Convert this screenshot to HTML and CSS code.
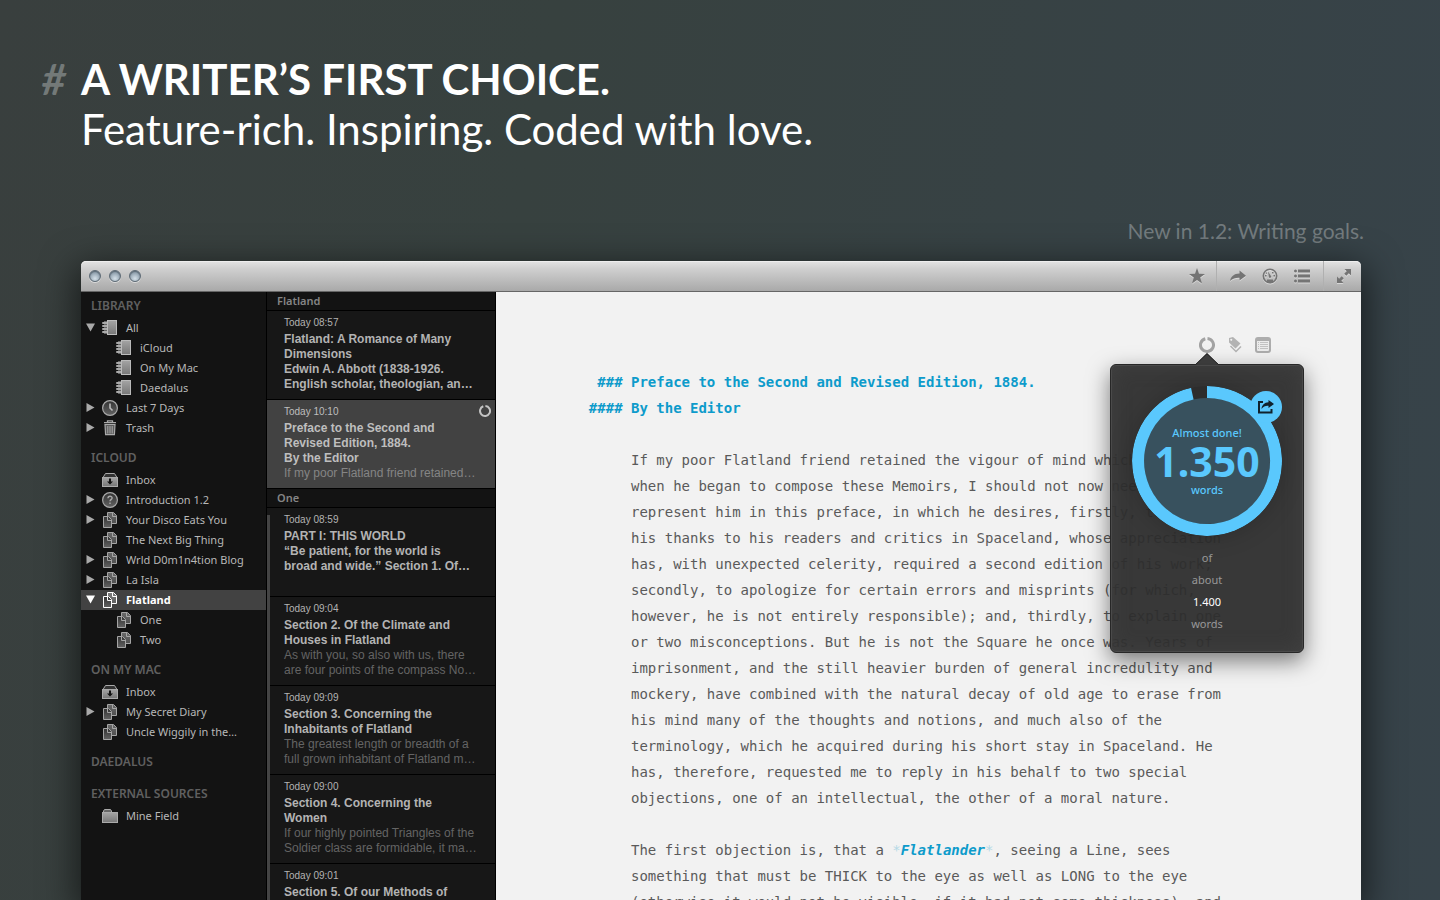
FILE: index.html
```html
<!DOCTYPE html>
<html lang="en">
<head>
<meta charset="utf-8">
<meta name="viewport" content="width=device-width, initial-scale=1">
<title>A writer’s first choice</title>
<link rel="stylesheet" href="styles.css">
</head>
<body>
<svg class="defs" width="0" height="0" aria-hidden="true">
  <defs>
    <linearGradient id="metal" x1="0" y1="0" x2="0" y2="1"><stop offset="0" stop-color="#a4a4a4"/><stop offset="1" stop-color="#777"/></linearGradient>
    <linearGradient id="dark" x1="0" y1="0" x2="0" y2="1"><stop offset="0" stop-color="#333"/><stop offset="1" stop-color="#636363"/></linearGradient>
  </defs>
  <symbol id="notebook" viewBox="0 0 16 16">
    <rect x="2" y="1" width="4" height="13" fill="#666"/>
    <rect x="5.500" y=".5" width="9" height="14" fill="url(#metal)" stroke="#bbb"/>
    <path d="M5 2.500H.5v1H5M5 5.500H.5v1H5M5 8.500H.5v1H5M5 11.500H.5v1H5" fill="none" stroke="#aaa" stroke-width="1"/>
  </symbol>
  <symbol id="clock" viewBox="0 0 16 16">
    <circle cx="8" cy="8" r="7.400" fill="url(#dark)" stroke="#a9a9a9" stroke-width="1.200"/>
    <path d="M8 3.500V8l2.500 2.500" fill="none" stroke="#bbb" stroke-width="1.600"/>
  </symbol>
  <symbol id="trash" viewBox="0 0 16 16">
    <path d="M5.500 2V.9h5V2M2 2.600h12" fill="none" stroke="#aaa" stroke-width="1.300"/>
    <path d="M3 4.500h10l-.6 10.200H3.600z" fill="#5c5c5c" stroke="#aaa" stroke-width="1.200"/>
    <path d="M5.800 6v7.500M8 6v7.500M10.200 6v7.500" stroke="#aaa" stroke-width="1"/>
  </symbol>
  <symbol id="inbox" viewBox="0 0 16 16">
    <path d="M1 5.500L3.500 1.500h9L15 5.500" fill="#333" stroke="#aaa"/>
    <rect x=".5" y="5.500" width="15" height="9" fill="url(#metal)" stroke="#aaa"/>
    <path d="M7 6.500h2v3h2L8 12.500 5 9.500h2z" fill="#111"/>
  </symbol>
  <symbol id="help" viewBox="0 0 16 16">
    <circle cx="8" cy="8" r="7.400" fill="url(#dark)" stroke="#a9a9a9" stroke-width="1.200"/>
    <path d="M6 6.300c0-2.700 4.200-2.600 4.100-.2 0 1.500-2.100 1.600-2.100 3.200M8 10.600v1.500" fill="none" stroke="#aaa" stroke-width="1.400"/>
  </symbol>
  <symbol id="pages" viewBox="0 0 16 16">
    <path d="M5.500 .5h6l3 3v8h-9z" fill="url(#metal)" fill-opacity=".6" stroke="currentColor"/>
    <path d="M10.500 .5v4h4" fill="none" stroke="currentColor"/>
    <path d="M1.500 4.500h5l3 3v8h-8z" fill="url(#dark)" stroke="currentColor"/>
    <path d="M5.500 4.500v4h4" fill="none" stroke="currentColor"/>
  </symbol>
  <symbol id="folder" viewBox="0 0 16 16">
    <path d="M1.500 4V3l1-1.500h6l1 1.500v1" fill="#666" stroke="#aaa"/>
    <rect x=".5" y="4.500" width="15" height="10" fill="url(#metal)" stroke="#aaa"/>
  </symbol>
  <symbol id="right" viewBox="0 0 9 9"><path d="M.5 0L8.500 4.500.5 9z" fill="currentColor"/></symbol>
  <symbol id="down" viewBox="0 0 9 9"><path d="M0 .5h9L4.500 8.500z" fill="currentColor"/></symbol>
</svg>

<div class="page">
  <header class="hero">
    <span class="hash">#</span>
    <h1>A WRITER’S FIRST CHOICE.</h1>
    <p class="tagline">Feature-rich. Inspiring. Coded with love.</p>
  </header>
  <p class="news">New in 1.2: Writing goals.</p>

  <section class="window">
    <div class="titlebar">
      <div class="lights">
        <button class="light" aria-label="Close"></button>
        <button class="light" aria-label="Minimize"></button>
        <button class="light" aria-label="Zoom"></button>
      </div>
      <div class="tools">
        <div class="toolset"><button aria-label="Favourite"><svg viewBox="0 0 16 16"><path d="M8 0l2 5.800 6 .1-4.800 3.700L13 15.500 8 12l-5 3.500 1.800-5.900L0 5.900l6-.1z"/></svg></button></div>
        <div class="toolset wide">
          <button aria-label="Share"><svg viewBox="0 0 16 16"><path d="M9.500 2.500L16 7.800l-6.500 4.700V9.800C6 9.500 3 10.500 0 13c.8-4.500 4-7.500 9.500-7.600z"/></svg></button>
          <button aria-label="Statistics"><svg viewBox="0 0 16 16"><circle cx="8" cy="8" r="6.700" fill="none" stroke="#747474" stroke-width="1.600"/><path d="M6 3.500L9.300 8.500 8 10.500 6.800 9z"/><path d="M3 7h1.500v1.500H3zM11.500 7H13v1.500h-1.500zM10 4h1.500v1.500H10zM5 11.500h6V14H5zM3.800 4.500h1.200v1.200H3.800z"/></svg></button>
          <button aria-label="Outline"><svg viewBox="0 0 16 16"><path d="M4 1.500h12v3H4zM4 6.500h12v3H4zM4 11.500h12v3H4z"/><circle cx="1.500" cy="3" r="1.500"/><circle cx="1.500" cy="8" r="1.500"/><circle cx="1.500" cy="13" r="1.500"/></svg></button>
        </div>
        <div class="toolset last"><button aria-label="Full screen"><svg viewBox="0 0 16 16"><path d="M8.500 1H15v6.500l-2.200-2.200-2.500 2.500-2.100-2.100 2.500-2.500zM7.500 15H1V8.500l2.200 2.200 2.500-2.500 2.100 2.100-2.500 2.500z"/></svg></button></div>
      </div>
    </div>

    <div class="panes">
      <nav class="sidebar">
        <h2>LIBRARY</h2>
        <ul>
          <li><a href="#"><svg class="tri"><use href="#down"/></svg><svg class="ico"><use href="#notebook"/></svg>All</a></li>
          <li class="sub"><a href="#"><svg class="ico"><use href="#notebook"/></svg>iCloud</a></li>
          <li class="sub"><a href="#"><svg class="ico"><use href="#notebook"/></svg>On My Mac</a></li>
          <li class="sub"><a href="#"><svg class="ico"><use href="#notebook"/></svg>Daedalus</a></li>
          <li><a href="#"><svg class="tri"><use href="#right"/></svg><svg class="ico"><use href="#clock"/></svg>Last 7 Days</a></li>
          <li><a href="#"><svg class="tri"><use href="#right"/></svg><svg class="ico"><use href="#trash"/></svg>Trash</a></li>
        </ul>
        <h2>ICLOUD</h2>
        <ul>
          <li><a href="#"><svg class="tri"></svg><svg class="ico"><use href="#inbox"/></svg>Inbox</a></li>
          <li><a href="#"><svg class="tri"><use href="#right"/></svg><svg class="ico"><use href="#help"/></svg>Introduction 1.2</a></li>
          <li><a href="#"><svg class="tri"><use href="#right"/></svg><svg class="ico"><use href="#pages"/></svg>Your Disco Eats You</a></li>
          <li><a href="#"><svg class="tri"></svg><svg class="ico"><use href="#pages"/></svg>The Next Big Thing</a></li>
          <li><a href="#"><svg class="tri"><use href="#right"/></svg><svg class="ico"><use href="#pages"/></svg>Wrld D0m1n4tion Blog</a></li>
          <li><a href="#"><svg class="tri"><use href="#right"/></svg><svg class="ico"><use href="#pages"/></svg>La Isla</a></li>
          <li><a href="#" class="current"><svg class="tri"><use href="#down"/></svg><svg class="ico"><use href="#pages"/></svg>Flatland</a></li>
          <li class="sub"><a href="#"><svg class="ico"><use href="#pages"/></svg>One</a></li>
          <li class="sub"><a href="#"><svg class="ico"><use href="#pages"/></svg>Two</a></li>
        </ul>
        <h2>ON MY MAC</h2>
        <ul>
          <li><a href="#"><svg class="tri"></svg><svg class="ico"><use href="#inbox"/></svg>Inbox</a></li>
          <li><a href="#"><svg class="tri"><use href="#right"/></svg><svg class="ico"><use href="#pages"/></svg>My Secret Diary</a></li>
          <li><a href="#"><svg class="tri"></svg><svg class="ico"><use href="#pages"/></svg>Uncle Wiggily in the…</a></li>
        </ul>
        <h2>DAEDALUS</h2>
        <h2>EXTERNAL SOURCES</h2>
        <ul>
          <li><a href="#"><svg class="tri"></svg><svg class="ico"><use href="#folder"/></svg>Mine Field</a></li>
        </ul>
      </nav>

      <div class="sheets">
        <h3>Flatland</h3>
        <a href="#" class="sheet">
          <time>Today 08:57</time>
          <b>Flatland: A Romance of Many<br>Dimensions<br>Edwin A. Abbott (1838-1926.<br>English scholar, theologian, an…</b>
        </a>
        <a href="#" class="sheet selected">
          <time>Today 10:10</time>
          <svg class="goal" viewBox="0 0 12 12"><path d="M6.400 1A5 5 0 1 1 4.300 1.300" fill="none" stroke="#c4c4c4" stroke-width="2"/></svg>
          <b>Preface to the Second and<br>Revised Edition, 1884.<br>By the Editor</b>
          <span>If my poor Flatland friend retained…</span>
        </a>
        <h3>One</h3>
        <div class="group">
          <div class="rail"></div>
          <div class="stack">
            <a href="#" class="sheet">
              <time>Today 08:59</time>
              <b>PART I: THIS WORLD<br>“Be patient, for the world is<br>broad and wide.” Section 1. Of…</b>
            </a>
            <a href="#" class="sheet">
              <time>Today 09:04</time>
              <b>Section 2. Of the Climate and<br>Houses in Flatland</b>
              <span>As with you, so also with us, there<br>are four points of the compass No…</span>
            </a>
            <a href="#" class="sheet">
              <time>Today 09:09</time>
              <b>Section 3. Concerning the<br>Inhabitants of Flatland</b>
              <span>The greatest length or breadth of a<br>full grown inhabitant of Flatland m…</span>
            </a>
            <a href="#" class="sheet">
              <time>Today 09:00</time>
              <b>Section 4. Concerning the<br>Women</b>
              <span>If our highly pointed Triangles of the<br>Soldier class are formidable, it ma…</span>
            </a>
            <a href="#" class="sheet">
              <time>Today 09:01</time>
              <b>Section 5. Of our Methods of</b>
            </a>
          </div>
        </div>
      </div>

      <main class="editor">
        <div class="attachments">
          <div class="goalbox">
            <button class="attach" aria-label="Writing goal"><svg viewBox="0 0 16 16"><path d="M8.500 1.500A6.500 6.500 0 1 1 6.300 1.700" fill="none" stroke="#a3a3a3" stroke-width="3"/></svg></button>
            <aside class="popover">
              <svg class="tip" viewBox="0 0 24 12"><path d="M0 12L12 0l12 12z" fill="#3b3b3b"/><path d="M0 12L12 .7 24 12" fill="none" stroke="#222"/></svg>
              <div class="dial">
                <svg class="ring" viewBox="0 0 150 150">
                  <circle cx="75" cy="75" r="69" fill="#38515e" stroke="#2d2d2d" stroke-width="12"/>
                  <path d="M75 6A69 69 0 1 1 60.300 7.600" fill="none" stroke="#5ac8fd" stroke-width="12"/>
                </svg>
                <div class="count"><span>Almost done!</span><strong>1.350</strong><span>words</span></div>
                <button class="share" aria-label="Share goal"><svg viewBox="0 0 16 16"><path d="M5 3H1v10.500h12.500V10" fill="none" stroke="#10222d" stroke-width="2"/><path d="M10.500 1L16 5l-5.500 4V6.800C7.500 6.500 5.500 7.500 3.500 10 3.800 6 6.500 3.500 10.500 3.300z" fill="#10222d"/></svg></button>
              </div>
              <p class="target">of<br>about<br><em>1.400</em><br>words</p>
            </aside>
          </div>
          <button class="attach" aria-label="Keywords"><svg viewBox="0 0 16 16"><path fill-rule="evenodd" d="M2 1l4-1 7.500 6.500-5 5L2 5.500zM4.200 1.800a1 1 0 1 0 .1 0z" fill="#b3b3b3"/><path d="M3.500 9L9 14.500 14 9.500" fill="none" stroke="#b3b3b3" stroke-width="1.500"/></svg></button>
          <button class="attach" aria-label="Notes"><svg viewBox="0 0 16 16"><rect x="1" y="1" width="14" height="14" rx="2" fill="#ececec" stroke="#adadad" stroke-width="2"/><path d="M1 2h14v2H1z" fill="#adadad"/><path d="M3 5.500h1M5 5.500h8M3 7.500h1M5 7.500h8M3 9.500h1M5 9.500h8M3 11.500h1M5 11.500h8" stroke="#c2c2c2"/></svg></button>
        </div>
        <article class="text">
          <h4><span class="mark">### </span>Preface to the Second and Revised Edition, 1884.</h4>
          <h4><span class="mark">#### </span>By the Editor</h4>
          <p>If my poor Flatland friend retained the vigour of mind which<br>when he began to compose these Memoirs, I should not now need to<br>represent him in this preface, in which he desires, firstly, to return<br>his thanks to his readers and critics in Spaceland, whose appreciation<br>has, with unexpected celerity, required a second edition of his work;<br>secondly, to apologize for certain errors and misprints (for which,<br>however, he is not entirely responsible); and, thirdly, to explain one<br>or two misconceptions. But he is not the Square he once was. Years of<br>imprisonment, and the still heavier burden of general incredulity and<br>mockery, have combined with the natural decay of old age to erase from<br>his mind many of the thoughts and notions, and much also of the<br>terminology, which he acquired during his short stay in Spaceland. He<br>has, therefore, requested me to reply in his behalf to two special<br>objections, one of an intellectual, the other of a moral nature.</p>
          <p>The first objection is, that a <i>*</i><em>Flatlander</em><i>*</i>, seeing a Line, sees<br>something that must be THICK to the eye as well as LONG to the eye<br>(otherwise it would not be visible, if it had not some thickness); and</p>
        </article>
      </main>
    </div>
  </section>
</div>
</body>
</html>
```
FILE: styles.css
```css
* { box-sizing: border-box; }
body {
  margin: 0;
  font-family: "Noto Sans", "Open Sans", sans-serif;
  background: linear-gradient(100deg, #393f3e 0%, #37413f 35%, #37434a 100%);
}
h1, h2, h3, h4, p, ul { margin: 0; padding: 0; font-weight: normal; }
ul { list-style: none; }
a { color: inherit; text-decoration: none; }
button { padding: 0; border: 0; background: none; font: inherit; cursor: pointer; }
svg { display: block; }
.defs { position: absolute; }

.page {
  height: 100vh;
  display: flex;
  flex-direction: column;
  overflow: hidden;
  padding: 54px 79px 0 81px;
}

.hero {
  position: relative;
  color: #fff;
  font-family: Lato, sans-serif;
  font-size: 42px;
  line-height: 50px;
}
.hero h1 { font-size: 42px; font-weight: 700; }
.hash { position: absolute; right: 100%; margin-right: 15px; color: #737978; font-weight: 700; font-style: italic; }
.news {
  margin: 61px -3px 14px 0;
  text-align: right;
  font: 21px/32px Lato, sans-serif;
  color: #737b7e;
}

.window {
  flex: 1;
  min-height: 0;
  display: flex;
  flex-direction: column;
  border-radius: 5px 5px 0 0;
  box-shadow: 0 10px 36px 4px rgba(0, 0, 0, .6);
}
.titlebar {
  flex: none;
  height: 31px;
  display: flex;
  justify-content: space-between;
  align-items: center;
  padding-left: 8px;
  border-radius: 5px 5px 0 0;
  border-bottom: 1px solid #666;
  background: linear-gradient(#e3e3e3, #d0d0d0 25%, #a9a9a9);
  box-shadow: inset 0 1px #eee;
}
.lights { display: flex; gap: 8px; }
.light {
  width: 12px;
  height: 12px;
  border-radius: 50%;
  border: 1px solid #5d6a75;
  background: radial-gradient(circle at 50% 75%, #d5e1e9, #8798a6 75%);
  box-shadow: 0 1px rgba(255, 255, 255, .5), inset 0 1px 1px #5d6a75;
}
.tools, .toolset { display: flex; align-items: center; height: 100%; }
.toolset { padding: 0 11px; border-right: 1px solid #b0b0b0; }
.toolset.wide { padding: 0 13px; gap: 16px; }
.toolset.last { padding: 0 9px 0 12px; border: 0; }
.toolset svg { width: 16px; height: 16px; fill: #747474; filter: drop-shadow(0 1px rgba(255, 255, 255, .45)); }

.panes { flex: 1; min-height: 0; display: flex; overflow: hidden; background: #131313; }

.sidebar {
  flex: none;
  width: 186px;
  padding-top: 2px;
  border-right: 1px solid #000;
  font-size: 11px;
  font-weight: 500;
  color: #b8b8b8;
}
.sidebar h2 { padding-left: 10px; font-size: 12px; line-height: 24px; font-weight: 600; color: #606060; }
.sidebar ul + h2, .sidebar h2 + h2 { margin-top: 8px; }
.sidebar a { display: flex; align-items: center; height: 20px; padding: 0 0 1px 5px; white-space: nowrap; }
.sidebar .sub a { padding-left: 35px; }
.sidebar .current { background: #424242; color: #fff; font-weight: 700; }
.tri { width: 9px; height: 9px; margin-right: 7px; color: #a9a9a9; }
.ico { width: 16px; height: 16px; margin-right: 8px; color: #a5a5a5; }
.current .tri, .current .ico { color: #fff; }

.sheets {
  flex: none;
  width: 229px;
  border-right: 1px solid #000;
  font: 12px/15px "Liberation Sans", Arial, sans-serif;
  color: #b3b3b3;
  background: #171717;
}
.sheets h3 {
  height: 19px;
  padding-left: 10px;
  border-bottom: 1px solid #000;
  background: #131313;
  font: 600 11px/18px "Noto Sans", sans-serif;
  color: #858585;
}
.sheet {
  position: relative;
  display: block;
  height: 89px;
  padding: 3px 0 0 17px;
  border-bottom: 1px solid #000;
  white-space: nowrap;
}
.sheet time { display: block; font-size: 10px; line-height: 18px; }
.sheet b, .sheet span { display: block; }
.sheet span { color: #646464; }
.sheet.selected { background: #424242; color: #bebebe; }
.sheet.selected span { color: #858585; }
.goal { position: absolute; top: 5px; right: 4px; width: 12px; height: 12px; }
.group { display: flex; }
.rail { width: 3px; margin-top: 7px; background: #444; }
.stack { flex: 1; }
.stack .sheet { padding-left: 14px; }

.editor { flex: 1; min-width: 0; padding: 45px 90px 0 135px; background: #f2f2f2; }
.attachments { display: flex; justify-content: flex-end; gap: 12px; }
.attach { display: block; }
.attach svg { width: 16px; height: 16px; }
.goalbox { position: relative; width: 16px; height: 16px; }
.text {
  margin-top: 16px;
  font: 14px/26px "DejaVu Sans Mono", monospace;
  color: #5a5a5a;
  white-space: nowrap;
}
.text h4 { position: relative; font-size: 14px; font-weight: 700; color: #0d9bcb; }
.mark { position: absolute; right: 100%; white-space: pre; }
.text p { margin-top: 26px; }
.text em { font-weight: 700; color: #0d9bcb; }
.text i { font-style: normal; color: #b5d9e6; }

.popover {
  position: absolute;
  z-index: 1;
  top: 27px;
  left: 50%;
  width: 194px;
  margin-left: -97px;
  padding: 21px 0 17px;
  border: 1px solid #272727;
  border-radius: 6px;
  background: rgba(45, 45, 45, .95);
  box-shadow: 0 8px 22px rgba(0, 0, 0, .5), inset 0 0 0 1px #4a4a4a, inset 0 0 20px rgba(80, 80, 80, .4);
  text-align: center;
  font-size: 11px;
  font-weight: 500;
  color: #999;
}
.tip { position: absolute; top: -12px; left: 50%; width: 24px; height: 12px; margin-left: -12px; }
.dial { position: relative; width: 150px; height: 150px; margin: 0 auto; }
.ring { width: 150px; height: 150px; border-radius: 50%; box-shadow: 0 0 24px rgba(0, 0, 0, .2); }
.count {
  position: absolute;
  inset: 0;
  display: flex;
  flex-direction: column;
  align-items: center;
  justify-content: center;
  color: #5ac8fd;
}
.count span { line-height: 16px; }
.count strong { font-size: 41px; line-height: 41px; font-weight: 700; }
.share {
  position: absolute;
  top: 5px;
  right: 0;
  width: 32px;
  height: 32px;
  display: grid;
  place-items: center;
  border-radius: 50%;
  background: #5ac8fd;
}
.share svg { width: 16px; height: 16px; }
.target { margin-top: 11px; line-height: 22px; }
.target em { font-style: normal; color: #fff; }
```
